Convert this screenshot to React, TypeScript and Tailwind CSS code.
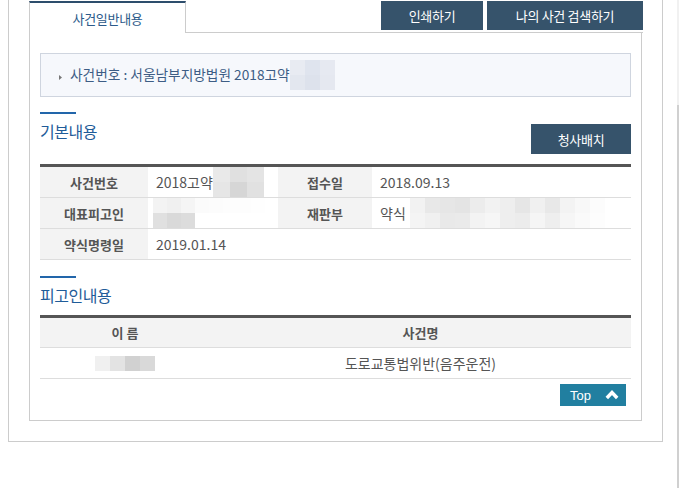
import React from "react";

const Pix = ({ rows, w = 15, h = 15 }: { rows: string[][]; w?: number; h?: number }) => (
  <span className="inline-flex flex-col align-middle">
    {rows.map((r, i) => (
      <span key={i} className="flex">
        {r.map((c, j) => (
          <span key={j} style={{ backgroundColor: c, width: w, height: h }} />
        ))}
      </span>
    ))}
  </span>
);

const Label = ({ children, w }: { children: React.ReactNode; w: string }) => (
  <div className={`${w} shrink-0 bg-[#f3f3f3] flex items-center justify-center text-[13px] font-bold text-[#555]`}>
    {children}
  </div>
);

export default function App() {
  return (
    <div className="flex min-h-[488px] bg-white font-['Noto_Sans_CJK_KR','Noto_Sans',sans-serif] leading-none">
      <div className="w-[677px] shrink-0">
        <div className="ml-[8px] w-[655px] border-x border-b border-[#cccccc] px-[20px] pb-[20px]">
          {/* top tab row */}
          <div className="flex h-[33px]">
            <div className="mt-[1px] w-[157px] border-t-2 border-x border-t-[#2d4d6c] border-x-[#cccccc] flex items-center justify-center text-[13px] text-[#2c5a8a] tracking-[-0.3px]">
              사건일반내용
            </div>
            <div className="flex-1 border-b border-[#cccccc] flex justify-end items-start pt-[1px] gap-[4px] -mr-[1px]">
              <button className="w-[102px] h-[29px] bg-[#36536b] text-white text-[13px] tracking-[-0.3px] flex items-center justify-center">인쇄하기</button>
              <button className="w-[156px] h-[29px] bg-[#36536b] text-white text-[13px] tracking-[-0.3px] flex items-center justify-center">나의 사건 검색하기</button>
            </div>
          </div>

          {/* content box */}
          <div className="border-x border-b border-[#cccccc] px-[10px] pt-[20px] pb-[14px]">
            <div className="h-[44px] border border-[#cfd5df] bg-[#f6f8fc] flex items-center pl-[18px] text-[13.7px] text-[#3d5d85]">
              <svg width="3" height="5" viewBox="0 0 3 5" className="mr-[8px] mt-[5px]">
                <polygon points="0,0 3,2.5 0,5" fill="#777" />
              </svg>
              <span>사건번호 : 서울남부지방법원 2018고약</span>
              <Pix rows={[["#e8ebf2", "#dfe4ee", "#e6e9f1"], ["#e3e7ef", "#dde2ec", "#e5e8f0"]]} />
            </div>

            {/* 기본내용 */}
            <div className="mt-[15px] w-[36px] h-[2px] bg-[#2266aa]" />
            <div className="mt-[7px] flex justify-between items-start h-[33px]">
              <div className="text-[16px] leading-[20px] text-[#1f5c99] tracking-[-0.5px]">기본내용</div>
              <button className="mt-[3px] w-[100px] h-[30px] bg-[#36536b] text-white text-[13px] tracking-[-0.3px] flex items-center justify-center">청사배치</button>
            </div>
            <div className="mt-[10px] border-t-[3px] border-[#555555] text-[14px] text-[#555]">
              <div className="flex h-[31px] border-b border-[#dddddd]">
                <Label w="w-[108px]">사건번호</Label>
                <div className="w-[130px] shrink-0 flex items-center pl-[8px]">
                  <span>2018고약</span>
                  <Pix rows={[["#e9e9e9", "#e0e0e0", "#e4e4e4"], ["#e6e6e6", "#d6d6d6", "#e1e1e1"]]} w={17} />
                </div>
                <Label w="w-[94px]">접수일</Label>
                <div className="flex-1 flex items-center pl-[8px]">2018.09.13</div>
              </div>
              <div className="flex h-[31px] border-b border-[#dddddd]">
                <Label w="w-[108px]">대표피고인</Label>
                <div className="w-[130px] shrink-0 flex items-center pl-[5px]">
                  <Pix rows={[["#f3f3f3", "#f0f0f0", "#f5f5f5", "#fbfbfb", "#fcfcfc", "#fdfdfd", "#fdfdfd", "#fefefe"], ["#e0e0e0", "#d9d9d9", "#dcdcdc", "#ffffff", "#ffffff", "#ffffff", "#ffffff", "#ffffff"]]} w={14} />
                </div>
                <Label w="w-[94px]">재판부</Label>
                <div className="flex-1 flex items-center pl-[8px]">
                  <span className="mr-[4px]">약식</span>
                  <Pix
                    rows={[
                      ["#f2f2f2", "#e8e8e8", "#e6e6e6", "#e4e4e4", "#ececec", "#f2f2f2", "#eeeeee", "#e6e6e6", "#f0f0f0", "#e8e8e8", "#f3f3f3", "#f8f8f8", "#fcfcfc"],
                      ["#f4f4f4", "#f0f0f0", "#e9e9e9", "#eaeaea", "#f3f3f3", "#f6f6f6", "#eeeeee", "#ececec", "#f5f5f5", "#eeeeee", "#f6f6f6", "#fafafa", "#fdfdfd"],
                    ]}
                  />
                </div>
              </div>
              <div className="flex h-[31px] border-b border-[#dddddd]">
                <Label w="w-[108px]">약식명령일</Label>
                <div className="flex-1 flex items-center pl-[8px]">2019.01.14</div>
              </div>
            </div>

            {/* 피고인내용 */}
            <div className="mt-[16px] w-[36px] h-[2px] bg-[#2266aa]" />
            <div className="mt-[7px] text-[16px] leading-[20px] text-[#1f5c99] tracking-[-0.5px]">피고인내용</div>
            <div className="mt-[10px] border-t-[3px] border-[#555555] text-[#555]">
              <div className="flex h-[30px] bg-[#f3f3f3] border-b border-[#dddddd] text-[13px] font-bold">
                <div className="w-[170px] shrink-0 flex items-center justify-center">이 름</div>
                <div className="flex-1 flex items-center justify-center">사건명</div>
              </div>
              <div className="flex h-[31px] border-b border-[#dddddd] text-[14px]">
                <div className="w-[170px] shrink-0 flex items-center justify-center">
                  <Pix rows={[["#f0f0f0", "#e3e3e3", "#d1d1d1", "#d9d9d9"]]} />
                </div>
                <div className="flex-1 flex items-center justify-center">도로교통법위반(음주운전)</div>
              </div>
            </div>
            <div className="mt-[5px] flex justify-end pr-[5px]">
              <button className="w-[66px] h-[22px] bg-[#217fa0] text-white flex items-center pl-[10px] pr-[7px] justify-between font-['Liberation_Sans',sans-serif] text-[13px]">
                <span>Top</span>
                <svg width="14" height="10" viewBox="0 0 14 10">
                  <polyline points="1.8,8 7,2.5 12.2,8" fill="none" stroke="white" strokeWidth="3.4" />
                </svg>
              </button>
            </div>
          </div>
        </div>
      </div>
      <div className="w-[2px] shrink-0 flex flex-col">
        <div className="h-[105px] bg-[#f1f1f1]" />
        <div className="flex-1 bg-[#d0d0d0]" />
      </div>
    </div>
  );
}
